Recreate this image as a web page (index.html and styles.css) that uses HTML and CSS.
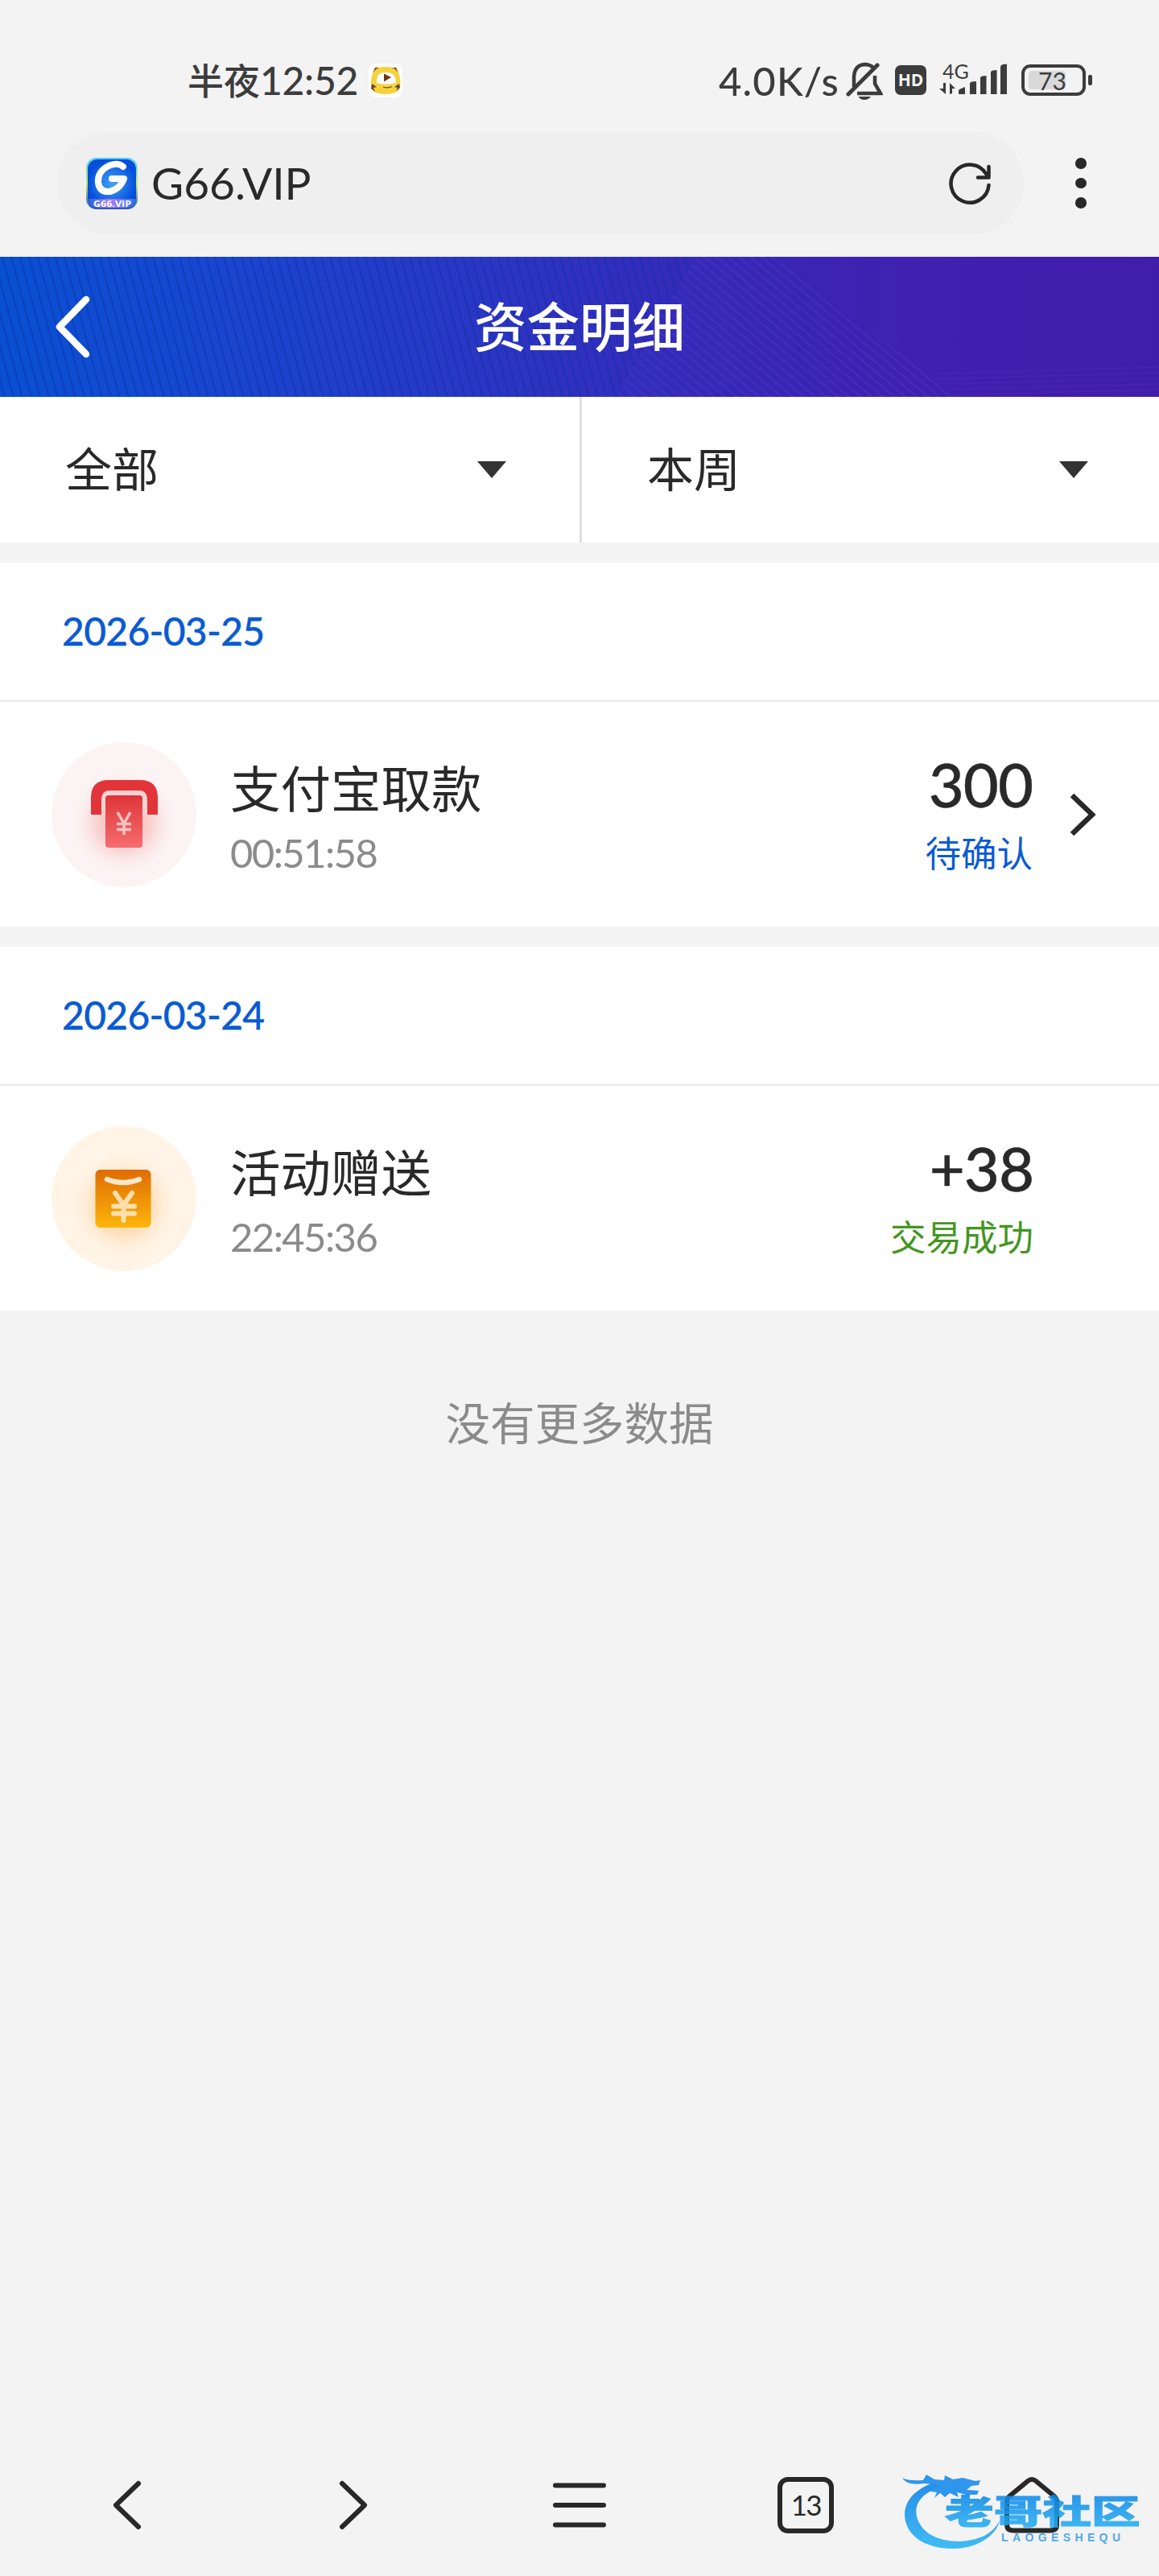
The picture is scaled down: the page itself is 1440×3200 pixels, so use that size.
FILE: index.html
```html
<!DOCTYPE html>
<html lang="zh-CN">
  <head>
    <meta charset="UTF-8" />
    <meta name="viewport" content="width=device-width, initial-scale=1.0" />
    <title>资金明细</title>
    <link rel="stylesheet" href="styles.css">
  </head>
  <body>
    <!-- phone status bar -->
    <div class="status">
      <span class="clock">半夜<span class="clock-num">12:52</span></span>
      <svg class="tiger" width="42" height="42" viewBox="0 0 42 42">
        <rect width="42" height="42" rx="9" fill="#fff" />
        <path d="M5 12L7 5L12 5Q21 3 30 5L35 5L38 13Q42 30 35 35Q29 38 21 38Q12 38 7 35Q0 28 5 12Z" fill="#f7d23e" />
        <path d="M6 11L8 5L13 5L9 7ZM36 11L34 5L29 5L33 7ZM4 25L10 29L6 30L8 35L3 31ZM38 25L32 29L36 30L34 34L39 30Z" fill="#6b4423" />
        <path d="M10 24Q9 11 21 11Q34 11 34 24Q21 27 10 24Z" fill="#fff" />
        <path d="M19 12.500L28 17L19 22.500Z" fill="#703718" />
        <path d="M18 29Q24 31 29 28.500" fill="none" stroke="#6b4423" stroke-width="1.200" />
      </svg>
      <div class="status-right">
        <span class="speed">4.0K/s</span>
        <svg class="bell" width="46" height="50" viewBox="0 0 46 50" fill="none" stroke="#3c3c3c" stroke-width="4.500">
          <path d="M10 31V18Q11 4 23 3Q30 3 34 7M36 17V27L43 39H14" />
          <path d="M3 40L39 4" stroke-width="5" stroke-linecap="round" />
          <path d="M15.500 43H31Q28 47 23 47Q18 47 15.500 43Z" fill="#3c3c3c" stroke="none" />
        </svg>
        <span class="hd">HD</span>
        <div class="signal">
          <span class="net">4G</span>
          <svg width="86" height="42" viewBox="0 0 86 42" fill="#3c3c3c">
            <path d="M5 26H8V40L0 33H5ZM13 40V26L20 33H16V39Z" />
            <path d="M24 36Q24 34 26 33.500L32 31V40H24ZM38 27Q38 25 41 24.500L46 24V40H38ZM51 20Q51 18 54 17.500L58.500 17V40H51ZM64 13Q64 11 67 10.500L71.500 10V40H64ZM76 6Q76 4 79 3L84 2.500V40H76Z" />
          </svg>
        </div>
        <div class="battery"><span>73</span></div>
      </div>
    </div>

    <!-- address bar -->
    <div class="address">
      <div class="url">
        <svg width="64" height="64" viewBox="0 0 64 64">
          <defs>
            <linearGradient id="edge" x2="0" y2="1">
              <stop offset="0" stop-color="#49cdf4" />
              <stop offset=".5" stop-color="#c8ee5e" />
              <stop offset="1" stop-color="#2c52c8" />
            </linearGradient>
            <radialGradient id="fav">
              <stop offset="0" stop-color="#3fa2f8" />
              <stop offset="1" stop-color="#064ddb" />
            </radialGradient>
            <linearGradient id="tag">
              <stop offset="0" stop-color="#2c63df" />
              <stop offset=".45" stop-color="#b07af0" />
              <stop offset="1" stop-color="#2d7be8" />
            </linearGradient>
          </defs>
          <rect width="64" height="64" rx="13" fill="url(#edge)" />
          <rect x="2" y="2" width="60" height="60" rx="12" fill="url(#fav)" />
          <path d="M3 51H61Q60 61 50 62H14Q4 61 3 51Z" fill="url(#tag)" />
          <path d="M46 11Q39 5 28 10Q14 17 15 31Q17 43 29 42Q42 39 47 26H32" fill="none" stroke="#fff" stroke-width="8" stroke-linejoin="round" stroke-linecap="round" />
          <text x="9" y="60.500" class="fav-text" textLength="47" lengthAdjust="spacingAndGlyphs">G66.VIP</text>
        </svg>
        <span class="host">G66.VIP</span>
        <svg class="reload" width="54" height="54" viewBox="0 0 54 54" fill="none" stroke="#282828" stroke-width="4.500" stroke-linecap="round" stroke-linejoin="round">
          <path d="M50.500 29A23.500 23.500 0 1 1 47.500 15.500L50 19.500M50.500 6V19.500H37" />
        </svg>
      </div>
      <div class="dots"><i></i><i></i><i></i></div>
    </div>

    <!-- page header -->
    <header>
      <svg class="lines" width="1440" height="174" viewBox="0 0 1440 174" fill="none">
        <defs>
          <linearGradient id="bar" x2="1" y2="0">
            <stop offset="0" stop-color="#0850d2" />
            <stop offset=".2" stop-color="#1945cf" />
            <stop offset=".5" stop-color="#3030bf" />
            <stop offset=".68" stop-color="#3a24b4" />
            <stop offset=".85" stop-color="#411fae" />
            <stop offset="1" stop-color="#401da9" />
          </linearGradient>
          <pattern id="left" width="11" height="174" patternUnits="userSpaceOnUse" patternTransform="skewX(15)">
            <path d="M3 0V174" stroke="#0c2fa4" stroke-width="2" opacity=".5" />
          </pattern>
          <pattern id="right" width="9" height="9" patternUnits="userSpaceOnUse" patternTransform="rotate(40)">
            <path d="M0 4H9" stroke="#5044d0" stroke-width="1.500" opacity=".4" />
          </pattern>
        </defs>
        <rect width="1440" height="174" fill="url(#bar)" />
        <path d="M0 0H865L765 174H0Z" fill="url(#left)" />
        <path d="M865 0H960L1190 174H765Z" fill="url(#right)" />
        <path d="M1155 146L1440 137M1160 152L1440 144M1166 158L1440 151M1174 165L1440 158M1182 172L1440 165" stroke="#5736bb" opacity=".4" />
      </svg>
      <svg class="back" width="48" height="84" viewBox="0 0 48 84">
        <path d="M40 8L7 42L40 76" fill="none" stroke="#fff" stroke-width="8.500" stroke-linecap="round" stroke-linejoin="round" />
      </svg>
      <h1>资金明细</h1>
    </header>

    <section class="filters">
      <div class="filter"><span>全部</span><i></i></div>
      <div class="filter"><span>本周</span><i></i></div>
    </section>

    <main>
      <article>
        <h3>2026-03-25</h3>
        <div class="record">
          <svg width="180" height="180" viewBox="0 0 180 180">
            <defs>
              <radialGradient id="red-glow">
                <stop offset="0" stop-color="#f27c7c" stop-opacity=".75" />
                <stop offset=".5" stop-color="#f6a5a5" stop-opacity=".4" />
                <stop offset="1" stop-color="#fcf4f4" stop-opacity="0" />
              </radialGradient>
              <linearGradient id="red" x2="0" y2="1">
                <stop offset="0" stop-color="#df3639" />
                <stop offset="1" stop-color="#f56d70" />
              </linearGradient>
            </defs>
            <circle cx="90" cy="90" r="90" fill="#fcf4f4" />
            <ellipse cx="90" cy="100" rx="70" ry="68" fill="url(#red-glow)" />
            <path d="M60 90V74Q60 60 73 60H107Q120 60 120 74V90Z" fill="#fbd2d2" />
            <path d="M49 90V69Q49 47 71 47H110Q132 47 132 69V90H119V72Q119 60 109 60H72Q62 60 62 72V90Z" fill="#e23539" />
            <rect x="67" y="66" width="46" height="65" rx="4" fill="url(#red)" />
            <path d="M82 87L90 101L98 87M81 101.500H99M81 108.500H99M90 101V115" fill="none" stroke="#fbc3c3" stroke-width="3.500" />
          </svg>
          <div class="info">
            <h4>支付宝取款</h4>
            <p>00:51:58</p>
          </div>
          <div class="money">
            <strong>300</strong>
            <span>待确认</span>
          </div>
          <svg class="more" width="36" height="60" viewBox="0 0 36 60">
            <path d="M4 6L29 30L4 54" fill="none" stroke="#292929" stroke-width="6.500" />
          </svg>
        </div>
      </article>

      <article>
        <h3>2026-03-24</h3>
        <div class="record">
          <svg width="180" height="180" viewBox="0 0 180 180">
            <defs>
              <radialGradient id="gold-glow">
                <stop offset="0" stop-color="#fbb55d" stop-opacity=".7" />
                <stop offset=".5" stop-color="#fccb90" stop-opacity=".5" />
                <stop offset="1" stop-color="#fff4e6" stop-opacity="0" />
              </radialGradient>
              <linearGradient id="gold" x2="0" y2="1">
                <stop offset="0" stop-color="#df6b05" />
                <stop offset="1" stop-color="#fcb609" />
              </linearGradient>
            </defs>
            <circle cx="90" cy="90" r="90" fill="#fff4e6" />
            <ellipse cx="90" cy="98" rx="70" ry="70" fill="url(#gold-glow)" />
            <rect x="54.500" y="54" width="69" height="72" rx="6" fill="url(#gold)" />
            <g fill="none" stroke="#fddfae" stroke-width="6.500" stroke-linecap="round" stroke-linejoin="round">
              <path d="M69 66Q89 74 109 66" stroke="#fee6c8" />
              <path d="M79 83L89.500 98L100 83M77 99.500H103M77 108.500H103M89.500 98V117" stroke-width="6" />
            </g>
          </svg>
          <div class="info">
            <h4>活动赠送</h4>
            <p>22:45:36</p>
          </div>
          <div class="money success">
            <strong>+38</strong>
            <span>交易成功</span>
          </div>
        </div>
      </article>
      <p class="end">没有更多数据</p>
    </main>

    <!-- browser toolbar -->
    <nav>
      <svg width="72" height="72" viewBox="0 0 72 72"><path d="M50 9L22 36L50 63" /></svg>
      <svg width="72" height="72" viewBox="0 0 72 72"><path d="M22 9L50 36L22 63" /></svg>
      <svg width="72" height="72" viewBox="0 0 72 72"><path d="M6 11.500H66M6 36H66M6 60.500H66" /></svg>
      <div class="tabs">13</div>
      <svg width="72" height="72" viewBox="0 0 72 72"><path d="M5 31Q5 28 8 25L31 6Q36 2 41 6L64 25Q67 28 67 31V60Q67 67.500 59 67.500H13Q5 67.500 5 60Z" /></svg>
    </nav>

    <svg class="watermark" width="320" height="110" viewBox="0 0 320 110">
      <defs>
        <linearGradient id="wm" x1="0" y1="0" x2="0" y2="1">
          <stop offset="0" stop-color="#087ee8" />
          <stop offset="1" stop-color="#28b5f3" />
        </linearGradient>
      </defs>
      <path d="M68 22C35 30 20 50 25 72C31 96 58 107 88 106C119 104 139 87 142 71C134 87 117 96 92 97C64 97 44 86 39 66C35 48 49 33 75 29Z" fill="url(#wm)" />
      <path d="M21 18Q28 22 47 21L51 14L61 20L73 21L74 15L84 20L96 18L112 22L118 21L116 27L107 28L101 33L116 34L114 39L100 39L89 36L91 42L80 37L74 42L68 37L61 43L64 36L56 35L67 27L48 25Q26 28 21 18Z" fill="#138aec" />
      <text class="wm-name" transform="translate(74 75) scale(1.480 1)" fill="url(#wm)" stroke="url(#wm)">老哥社区</text>
      <text class="wm-sub" x="144" y="97" textLength="148">LAOGESHEQU</text>
    </svg>
  </body>
</html>
```

FILE: styles.css
```css
* {
  box-sizing: border-box;
}
body {
  margin: 0;
  width: 1440px;
  height: 3200px;
  display: flex;
  flex-direction: column;
  position: relative;
  background: #f3f3f3;
  color: #292929;
  font-family: Lato, "Noto Sans CJK SC", sans-serif;
}
svg {
  display: block;
  flex-shrink: 0;
}
h1, h3, h4, p {
  margin: 0;
  font-weight: normal;
}

/* status bar */
.status {
  height: 164px;
  padding: 77px 83px 0 233px;
  display: flex;
  align-items: flex-start;
  color: #3c3c3c;
}
.clock {
  font-size: 45px;
  font-weight: 500;
  line-height: 46px;
  white-space: nowrap;
}
.clock-num {
  font-size: 48px;
  letter-spacing: -0.3px;
}
.tiger {
  margin: 2px 0 0 13px;
}
.status-right {
  margin-left: auto;
  display: flex;
}
.speed {
  font-size: 49px;
  font-weight: 500;
  line-height: 46px;
  letter-spacing: 1.2px;
}
.bell {
  margin-left: 8px;
}
.hd {
  width: 39px;
  height: 37px;
  margin: 4px 0 0 15px;
  border-radius: 7px;
  background: #3c3c3c;
  color: #f3f3f3;
  font: bold 21px/37px "Open Sans", sans-serif;
  text-align: center;
}
.signal {
  position: relative;
  margin-left: 16px;
}
.net {
  position: absolute;
  left: 4px;
  top: -1px;
  font-size: 25px;
  line-height: 24px;
}
.battery {
  position: relative;
  width: 80px;
  height: 39px;
  margin: 3px 8px 0 16px;
  padding: 4px 5px;
  border: 4px solid #3c3c3c;
  border-radius: 11px;
}
.battery span {
  display: block;
  width: 46px;
  height: 23px;
  padding-left: 12px;
  border-radius: 4px;
  background: #d9d9d9;
  font-size: 30px;
  line-height: 24px;
}
.battery::after {
  content: "";
  position: absolute;
  right: -12px;
  top: 9px;
  width: 5px;
  height: 13px;
  border-radius: 2px;
  background: #3c3c3c;
}

/* address bar */
.address {
  height: 155px;
  padding-left: 71px;
  display: flex;
}
.url {
  width: 1201px;
  height: 127px;
  padding: 0 40px 0 36px;
  border-radius: 64px;
  background: #efefef;
  display: flex;
  align-items: center;
}
.host {
  margin: -2px 0 0 17px;
  font-size: 55px;
}
.reload {
  margin-left: auto;
}
.fav-text {
  font: bold 10px "Open Sans", sans-serif;
  fill: #fff;
}
.dots {
  height: 127px;
  margin-left: 64px;
  display: flex;
  flex-direction: column;
  justify-content: center;
  gap: 11px;
}
.dots i {
  width: 13.5px;
  height: 13.5px;
  border-radius: 50%;
  background: #282828;
}

/* page header */
header {
  position: relative;
  height: 174px;
  padding-bottom: 7px;
  display: flex;
  align-items: center;
  justify-content: center;
  color: #fff;
}
.lines, .back {
  position: absolute;
  left: 0;
  top: 0;
}
.back {
  left: 67px;
  top: 45px;
}
h1 {
  position: relative;
  font-size: 65.5px;
  font-weight: 500;
}

.filters {
  height: 181px;
  display: flex;
  background: #fff;
}
.filter {
  flex: 1;
  display: flex;
  align-items: center;
  justify-content: space-between;
  padding: 0 88px 0 81px;
  font-size: 58px;
}
.filter:first-child {
  padding-right: 91px;
}
.filter span {
  margin-top: -7px;
}
.filter + .filter {
  border-left: 3px solid #dfdfdf;
}
.filter i {
  border: 18px solid transparent;
  border-top: 21px solid #333;
  border-bottom: 0;
}

/* records */
main {
  flex: 1;
}
article {
  height: 452px;
  margin-top: 25px;
  background: #fff;
}
h3 {
  height: 173px;
  padding-left: 77px;
  border-bottom: 3px solid #ececec;
  color: #0a5bd3;
  font-size: 48px;
  font-weight: 500;
  line-height: 170px;
  letter-spacing: -0.7px;
  -webkit-text-stroke: 0.3px;
}
.record {
  height: 280px;
  padding: 0 76px 0 64px;
  display: flex;
  align-items: center;
}
.info {
  margin: 12px 0 0 42px;
}
h4 {
  font-size: 62.5px;
  line-height: 80px;
}
.info p {
  margin-top: 2px;
  color: #8b8b8b;
  font-size: 49px;
  line-height: 74px;
  letter-spacing: -1.6px;
}
.money {
  width: 300px;
  margin-left: auto;
  margin-right: 80px;
  padding-top: 6px;
  text-align: right;
}
.money strong {
  display: block;
  margin-top: 2px;
  font-size: 76px;
  font-weight: 500;
  line-height: 84px;
  letter-spacing: -1px;
  -webkit-text-stroke: 0.4px;
}
.money span {
  display: block;
  margin-top: 4px;
  color: #0a5bd3;
  font-size: 44.5px;
  line-height: 80px;
}
.money.success span {
  color: #43961f;
}
.more {
  margin-left: -35px;
}
.end {
  margin-top: 100px;
  color: #8b8b8b;
  font-size: 55.5px;
  line-height: 80px;
  text-align: center;
}

/* browser toolbar */
nav {
  height: 176px;
  padding: 52px 17px 0 17px;
  display: flex;
  justify-content: space-around;
}
nav svg {
  fill: none;
  stroke: #282828;
  stroke-width: 6;
  stroke-linecap: round;
  stroke-linejoin: round;
}
.tabs {
  width: 70px;
  height: 70px;
  margin: 1px;
  border: 6px solid #282828;
  border-radius: 13px;
  font-size: 35px;
  line-height: 57px;
  letter-spacing: -2px;
  text-align: center;
}
.watermark {
  position: absolute;
  left: 1100px;
  top: 3060px;
  opacity: 0.88;
}
.wm-name {
  font: 900 41px "Noto Sans CJK SC", sans-serif;
  stroke-width: 1px;
}
.wm-sub {
  font: bold 14px "Liberation Sans", sans-serif;
  fill: #3a9fe8;
}
```
